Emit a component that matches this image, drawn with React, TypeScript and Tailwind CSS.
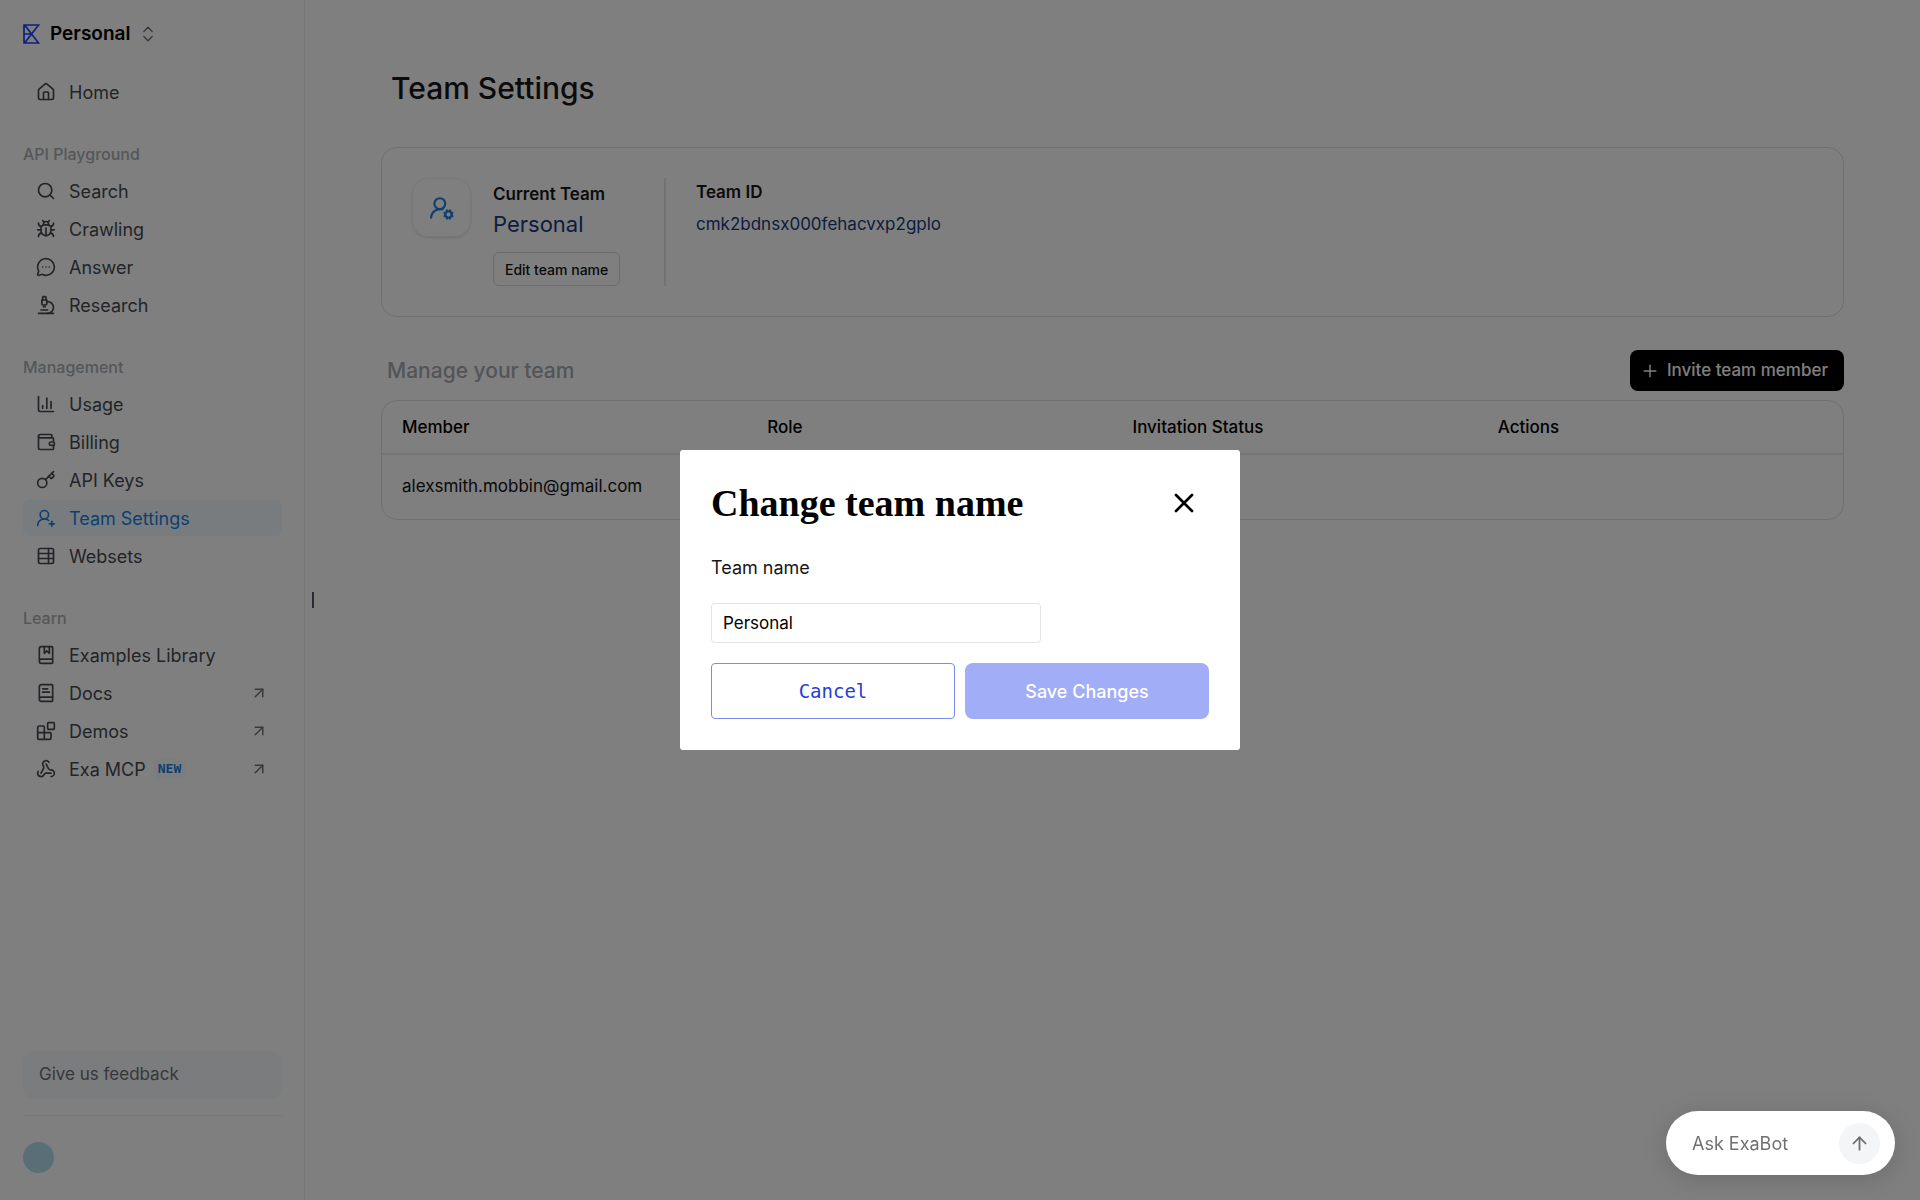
import React from "react";
import {
  ArrowUp,
  ArrowUpRight,
  Blocks,
  BookMarked,
  BookText,
  Bug,
  ChartColumn,
  ChevronsUpDown,
  House,
  Key,
  MessageCircleMore,
  Microscope,
  Plus,
  Search,
  TableProperties,
  UserRoundCog,
  UserRoundPlus,
  Wallet,
  Webhook,
  X,
  type LucideIcon,
} from "lucide-react";

type NavItem = {
  label: string;
  icon: LucideIcon;
  active?: boolean;
  external?: boolean;
  badge?: string;
};

const groups: { title: string; items: NavItem[] }[] = [
  {
    title: "API Playground",
    items: [
      { label: "Search", icon: Search },
      { label: "Crawling", icon: Bug },
      { label: "Answer", icon: MessageCircleMore },
      { label: "Research", icon: Microscope },
    ],
  },
  {
    title: "Management",
    items: [
      { label: "Usage", icon: ChartColumn },
      { label: "Billing", icon: Wallet },
      { label: "API Keys", icon: Key },
      { label: "Team Settings", icon: UserRoundPlus, active: true },
      { label: "Websets", icon: TableProperties },
    ],
  },
  {
    title: "Learn",
    items: [
      { label: "Examples Library", icon: BookMarked },
      { label: "Docs", icon: BookText, external: true },
      { label: "Demos", icon: Blocks, external: true },
      { label: "Exa MCP", icon: Webhook, external: true, badge: "NEW" },
    ],
  },
];

function Logo() {
  return (
    <svg width="17" height="20" viewBox="0 0 17 20" fill="none" stroke="#1f3fff" strokeWidth="1.7" aria-hidden="true">
      <path d="M1 1h14.6L1.6 19M1 19h14.6L1.6 1M1 0.2v19.6M1 10h7" />
    </svg>
  );
}

function NavLink({ item }: { item: NavItem }) {
  const Icon = item.icon;
  return (
    <a
      href="#"
      aria-current={item.active ? "page" : undefined}
      className={
        item.active
          ? "flex h-9 items-center rounded-md bg-[#f2f9ff] pr-3.5 pl-[13px] text-[18px] text-[#1a7fe0]"
          : "flex h-9 items-center rounded-md pr-3.5 pl-[13px] text-[18px] text-[#46494f]"
      }
    >
      <Icon size={20} strokeWidth={2} />
      <span className="ml-[13px]">{item.label}</span>
      {item.badge && (
        <span className="ml-2 rounded bg-[#f6fbff] px-1 font-['DejaVu_Sans_Mono',monospace] text-[13px] leading-5 font-bold text-[#1a7fe0]">
          {item.badge}
        </span>
      )}
      {item.external && <ArrowUpRight size={18} strokeWidth={2} className="ml-auto text-[#70747a]" />}
    </a>
  );
}

function Sidebar() {
  return (
    <aside className="flex w-[305px] shrink-0 flex-col border-r border-[#eceef0] pt-4 pr-[22px] pb-[27px] pl-[23px]">
      <button className="flex h-9 items-center text-left text-[19px] font-semibold text-black">
        <Logo />
        <span className="ml-2.5">Personal</span>
        <ChevronsUpDown size={20} strokeWidth={1.75} className="ml-2 text-[#70747a]" />
      </button>
      <nav className="mt-[22px] flex flex-col">
        <NavLink item={{ label: "Home", icon: House }} />
        {groups.map((g) => (
          <div key={g.title} className="mt-8">
            <h2 className="mb-[7px] text-[16px] leading-6 font-medium text-[#a8aeb4]">{g.title}</h2>
            <div className="flex flex-col gap-0.5">
              {g.items.map((item) => (
                <NavLink key={item.label} item={item} />
              ))}
            </div>
          </div>
        ))}
      </nav>
      <button className="mt-auto h-12 rounded-xl bg-[#f6f8fa] px-4 text-left text-[17px] text-[#6b7076]">
        Give us feedback
      </button>
      <hr className="mt-4 border-[#eceef0]" />
      <div className="mt-[26px] size-[31px] rounded-full bg-[#b5dcee]" />
    </aside>
  );
}

function TeamCard() {
  return (
    <section className="flex rounded-2xl border border-[#dcdee0] p-[30px]">
      <div className="flex size-[59px] items-center justify-center rounded-2xl border border-[#eceef0] text-[#1a7fe0] shadow-sm">
        <UserRoundCog size={26} strokeWidth={2} />
      </div>
      <div className="ml-[22px] box-content flex w-[171px] flex-col items-start border-r-2 border-[#e4e6e8] pt-1">
        <h2 className="text-[17px] leading-6 font-semibold text-[#161616]">Current Team</h2>
        <p className="mt-0.5 text-[22px] leading-8 text-[#1a3a7c]">Personal</p>
        <button className="mt-3 h-[34px] rounded-md border border-[#d6d8da] px-[11px] text-[14px] font-medium text-[#111]">
          Edit team name
        </button>
      </div>
      <div className="ml-[30px] pt-0.5">
        <h2 className="text-[17px] leading-6 font-semibold text-[#161616]">Team ID</h2>
        <p className="mt-2 text-[17px] leading-6 text-[#1a3a7c]">cmk2bdnsx000fehacvxp2gplo</p>
      </div>
    </section>
  );
}

function MembersTable() {
  return (
    <div className="mt-[9px] overflow-hidden rounded-2xl border border-[#dcdee0]">
      <table className="w-full table-fixed text-left text-[17px]">
        <thead>
          <tr className="h-[53px] border-b-2 border-[#e8eaec] text-black">
            {["Member", "Role", "Invitation Status", "Actions"].map((h) => (
              <th key={h} scope="col" className="px-5 pt-0.5 font-medium">
                {h}
              </th>
            ))}
          </tr>
        </thead>
        <tbody>
          <tr className="h-[65px] text-[#111]">
            <td className="px-5">alexsmith.mobbin@gmail.com</td>
            <td className="px-5" />
            <td className="px-5" />
            <td className="px-5" />
          </tr>
        </tbody>
      </table>
    </div>
  );
}

function Dialog() {
  return (
    <div className="fixed inset-0 z-10 flex items-center justify-center bg-black/50">
      <div
        role="dialog"
        aria-modal="true"
        aria-labelledby="dialog-title"
        className="w-full max-w-[560px] rounded-[3px] bg-white px-[31px] pt-7 pb-[31px]"
      >
        <div className="flex items-center justify-between">
          <h2 id="dialog-title" className="font-['Liberation_Serif',serif] text-[38px] leading-[50px] font-bold text-black">
            Change team name
          </h2>
          <button aria-label="Close" className="mr-[9px] flex size-8 items-center justify-center text-black">
            <X size={32} strokeWidth={2} />
          </button>
        </div>
        <label htmlFor="team-name" className="mt-[26px] block text-[18px] leading-7 text-[#161616]">
          Team name
        </label>
        <input
          id="team-name"
          type="text"
          defaultValue="Personal"
          className="mt-[21px] block h-10 w-[330px] rounded-sm border border-[#e2e4e6] px-[11px] text-[17px] text-black outline-none"
        />
        <div className="mt-5 grid grid-cols-2 gap-2.5">
          <button className="h-14 rounded-sm border border-[#7a8cf0] font-['DejaVu_Sans_Mono',monospace] text-[19px] text-[#1f40d8]">
            Cancel
          </button>
          <button className="h-14 rounded-lg bg-[#a2adf8] text-[18px] font-medium text-white">Save Changes</button>
        </div>
      </div>
    </div>
  );
}

export default function App() {
  return (
    <div className="flex min-h-screen bg-white font-['Inter',sans-serif]">
      <Sidebar />
      <div className="flex w-4 shrink-0 items-center justify-center">
        <div className="h-4 w-0.5 bg-[#54546c]" />
      </div>
      <main className="min-w-0 flex-1 pt-16 pr-[76px] pl-[60px]">
        <h1 className="mb-[34px] ml-2.5 text-[30px] leading-[49px] font-medium text-[#161616]">Team Settings</h1>
        <TeamCard />
        <div className="mt-[33px] flex items-center justify-between">
          <h2 className="ml-1.5 text-[21px] font-medium text-[#a4aab0]">Manage your team</h2>
          <button className="flex h-[41px] items-center rounded-lg bg-black pr-4 pl-2.5 text-[17px] font-medium text-white">
            <Plus size={20} strokeWidth={1.75} />
            <span className="ml-[7px]">Invite team member</span>
          </button>
        </div>
        <MembersTable />
      </main>
      <Dialog />
      <form className="fixed right-[25px] bottom-[25px] z-20 flex h-16 w-[229px] items-center rounded-full bg-white pr-[15px] pl-[26px] shadow-[0_4px_24px_rgba(0,0,0,0.15)]">
        <input
          type="text"
          aria-label="Ask ExaBot"
          placeholder="Ask ExaBot"
          className="min-w-0 flex-1 text-[18px] text-[#707070] outline-none placeholder:text-[#707070]"
        />
        <button
          type="button"
          aria-label="Send"
          className="flex size-[41px] shrink-0 items-center justify-center rounded-full bg-[#f3f5f7] text-[#6b6b6b]"
        >
          <ArrowUp size={21} strokeWidth={2} />
        </button>
      </form>
    </div>
  );
}
